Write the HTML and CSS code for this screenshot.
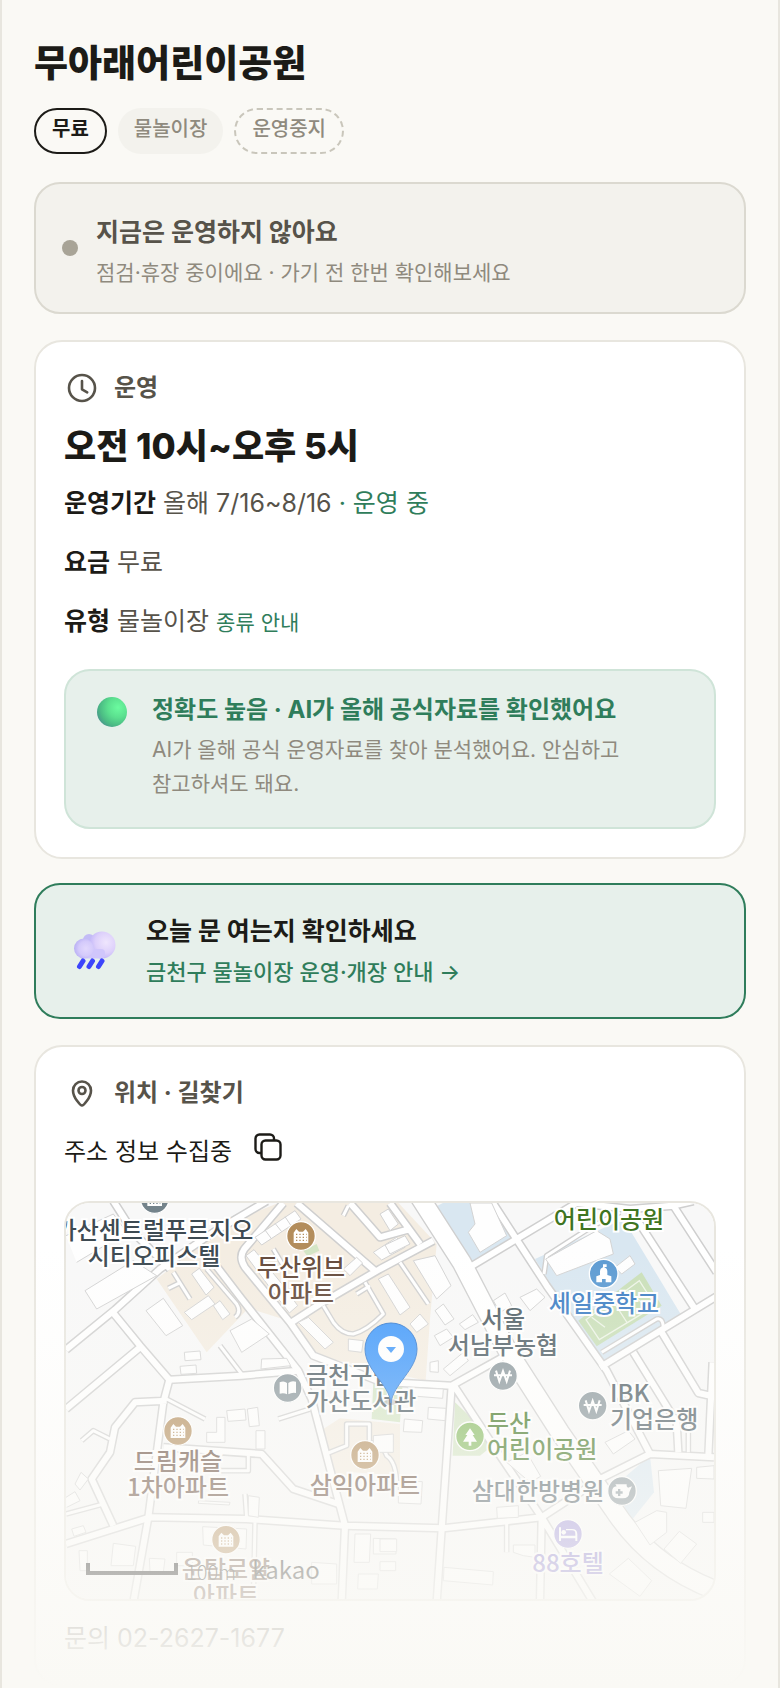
FILE: index.html
```html
<!DOCTYPE html>
<html lang="ko">
<head>
  <meta charset="UTF-8">
  <meta name="viewport" content="width=device-width, initial-scale=1.0">
  <title>무아래어린이공원</title>
  <link rel="stylesheet" href="styles.css">
</head>
<body>
  <main class="screen">
    <header class="place-header">
      <h1 class="place-name">무아래어린이공원</h1>
      <div class="chips">
        <span class="chip chip-free">무료</span>
        <span class="chip chip-type">물놀이장</span>
        <span class="chip chip-closed">운영중지</span>
      </div>
    </header>

    <section class="status">
      <span class="status-dot"></span>
      <div class="status-text">
        <p class="lead">지금은 운영하지 않아요</p>
        <p class="sub">점검·휴장 중이에요 · 가기 전 한번 확인해보세요</p>
      </div>
    </section>

    <!-- 운영 정보 -->
    <section class="card">
      <h2 class="card-title">
        <svg class="card-icon" viewBox="0 0 36 36" aria-hidden="true">
          <circle cx="18" cy="18" r="13"/>
          <path d="M18 11v8.300l5.200 3"/>
        </svg>
        운영
      </h2>
      <p class="hours">오전 10시~오후 5시</p>
      <div class="rows">
        <p class="row"><b>운영기간</b> 올해 7/16~8/16 <span class="open">· 운영 중</span></p>
        <p class="row"><b>요금</b> 무료</p>
        <p class="row"><b>유형</b> 물놀이장 <a class="type-link" href="#">종류 안내</a></p>
      </div>
      <div class="trust">
        <svg class="trust-icon" viewBox="0 0 44 44" aria-hidden="true">
          <defs>
            <radialGradient id="ball" cx="0.7" cy="0.35" r="0.75">
              <stop offset="0" stop-color="#6bfb9f"/>
              <stop offset="0.45" stop-color="#5be08f"/>
              <stop offset="0.8" stop-color="#4bbb84"/>
              <stop offset="1" stop-color="#4a9a8c"/>
            </radialGradient>
          </defs>
          <circle cx="22" cy="22" r="15" fill="url(#ball)"/>
        </svg>
        <div>
          <p class="trust-title">정확도 높음 · AI가 올해 공식자료를 확인했어요</p>
          <p class="trust-desc">AI가 올해 공식 운영자료를 찾아 분석했어요. 안심하고 참고하셔도 돼요.</p>
        </div>
      </div>
    </section>

    <a class="today" href="#">
      <svg class="today-icon" viewBox="0 0 56 56" aria-hidden="true">
        <defs>
          <radialGradient id="puffA" cx="0.65" cy="0.4" r="0.65">
            <stop offset="0" stop-color="#efe6fd"/>
            <stop offset="0.6" stop-color="#ddd0fb"/>
            <stop offset="1" stop-color="#bfb4f8"/>
          </radialGradient>
          <radialGradient id="puffB" cx="0.6" cy="0.5" r="0.6">
            <stop offset="0" stop-color="#e2d8fd"/>
            <stop offset="0.6" stop-color="#d4cafb"/>
            <stop offset="1" stop-color="#b9b0f4"/>
          </radialGradient>
        </defs>
        <circle cx="23" cy="17" r="6" fill="#c3bbf6"/>
        <circle cx="36" cy="22" r="13.500" fill="url(#puffA)"/>
        <rect x="13" y="26" width="26" height="9.500" rx="4" fill="#d0c6fb"/>
        <circle cx="18" cy="25.500" r="10" fill="url(#puffB)"/>
        <g stroke="#3d45fb" stroke-width="5" stroke-linecap="round">
          <path d="M13.500 43.500l3.500-5.500M23 43.500l3.500-5.500M32.500 43.500l3.500-5.500"/>
        </g>
      </svg>
      <span class="today-text">
        <span class="lead">오늘 문 여는지 확인하세요</span>
        <span class="today-sub">금천구 물놀이장 운영·개장 안내 →</span>
      </span>
    </a>

    <!-- 위치 -->
    <section class="card">
      <h2 class="card-title">
        <svg class="card-icon" viewBox="0 0 36 36" aria-hidden="true">
          <path d="M18 30.500c-1.200 0-9-7.500-9-15a9 9 0 0 1 18 0c0 7.500-7.800 15-9 15z"/>
          <circle cx="18" cy="15.500" r="3.500"/>
        </svg>
        위치 · 길찾기
      </h2>
      <div class="address">
        <span>주소 정보 수집중</span>
        <button class="copy" type="button" aria-label="주소 복사">
          <svg viewBox="0 0 28 28" aria-hidden="true">
            <rect x="7.500" y="7.500" width="19" height="19" rx="4"/>
            <path d="M7 20H5.500a4 4 0 0 1-4-4V5.500a4 4 0 0 1 4-4H16a4 4 0 0 1 4 4V7"/>
          </svg>
        </button>
      </div>

      <div class="map">
        <svg class="map-ground" viewBox="198 42 1944 1188" preserveAspectRatio="xMidYMid slice" aria-hidden="true">
          <defs>
            <g id="roads">
              <path d="M198 482L345 362L480 240L640 130L800 36M340 36L400 130L510 240"/>
              <path d="M340 372L420 470L508 572L725 560L895 545M198 660L420 475"/>
              <path d="M610 180L725 330L895 545L935 630L1035 1010L1025 1240"/>
              <path d="M508 572L490 640L445 985L400 1240M500 635L405 640L345 715L330 790L275 870L340 1010"/>
              <path d="M198 1065L450 985L740 990L1035 1010L1330 1018L1625 985L1810 865L1950 795L2142 805"/>
              <path d="M490 775L785 795L880 900L1015 945"/>
              <path d="M1475 36L1640 290L1820 545L1950 795M1400 240L1550 150L1730 42"/>
              <path d="M1800 535L2150 322M1890 60L2085 360M2020 50L2150 250M1730 42L1890 60L2020 50L2080 36"/>
              <path d="M1355 590L1325 1020L1310 1240M1362 590L1480 770L1625 985L1780 1240M1625 985L1620 1240"/>
              <path d="M850 42L733 180Q715 205 735 235L870 400L940 500L1140 578L1355 590L1520 498"/>
              <path d="M890 42L1130 250M875 400L960 345L1140 240L1300 155M1050 42L1140 145L1230 120M1170 42L1260 165"/>
              <path d="M1985 430L2095 612L2150 625M1900 490L2030 700L2035 790M2138 520L2125 800"/>
            </g>
            <g id="lanes">
              <path d="M1095 280L1150 375Q1100 425 1060 435Q1025 435 1000 400L970 350M1200 220L1285 345"/>
              <path d="M620 240L710 345Q725 370 705 385M520 250L570 330M505 298L542 280M660 470L725 555"/>
              <path d="M835 690L930 660M500 630L615 690M245 755L280 725L330 750M735 915L740 985M765 1000L760 1240"/>
              <path d="M198 975L310 945M1520 1005L1520 1090M985 792L1040 770V705H1108V760Q1150 765 1160 800Q1190 820 1190 890"/>
              <path d="M1632 255L1640 200L1780 110L1860 70M1805 490L1970 390Q1990 385 1990 420M660 845H745V800"/>
              <path d="M1030 80L1045 50M820 180L850 230M2065 700V790M1070 315L1110 290"/>
            </g>
            <symbol id="apt" viewBox="-44 -44 88 88">
              <path fill="#fff" d="M-22 21V-10L-14-21L-6-13H6L14-21L22-10V21z"/>
              <path stroke="currentColor" stroke-width="4" stroke-dasharray="4 6" d="M-15-5H17M-15 4H17M-15 13H17"/>
            </symbol>
            <symbol id="won" viewBox="-44 -44 88 88">
              <path fill="none" stroke="#fff" stroke-width="6" d="M-21-16L-11 16L0-15L11 16L21-16M-27-2H27"/>
            </symbol>
          </defs>

          <rect x="198" y="42" width="1944" height="1188" fill="#f8f8f8"/>
          <path fill="#f4ede2" d="M690 100L850 36H1190L1310 165L1290 390L1277 575L950 500L880 400L745 358L620 490L470 270z"/>
          <path fill="#f4ede2" d="M970 720L1020 688L1200 705V860L1060 850L1000 890z"/>
          <path fill="#d9e7f1" d="M1275 70L1340 36H1475L1545 150L1400 240zM1605 210L1870 90L2045 380L1800 520z"/>
          <path fill="#d9e7f1" d="M1850 885L1950 800L1962 910L1890 1000z"/>
          <path fill="#c9dfb8" d="M1735 395L1925 250L1985 350L1790 472z"/>
          <path fill="none" stroke="#eef5e8" stroke-width="4" d="M1758 392L1918 275L1966 350L1798 452zM1838 334L1882 402M1775 385L1815 415M1880 305L1925 340"/>
          <path fill="#d4e5c5" d="M1120 580H1208L1200 700L1115 690zM1365 640L1358 800H1440L1490 760zM910 185L950 165L958 185L922 202z"/>

          <g fill="none" stroke="#cfcfcf" stroke-linejoin="round">
            <use href="#roads" stroke-width="27"/>
            <use href="#lanes" stroke-width="17"/>
            <path stroke-width="62" d="M1250 10L1385 220L1520 480L1680 730L1840 960Q1950 1130 2150 1205"/>
          </g>
          <g fill="none" stroke="#fff" stroke-linejoin="round">
            <use href="#roads" stroke-width="18"/>
            <use href="#lanes" stroke-width="9"/>
            <path stroke-width="54" d="M1250 10L1385 220L1520 480L1680 730L1840 960Q1950 1130 2150 1205"/>
          </g>

          <g fill="#fefefe" stroke="#d3d3d3" stroke-width="3">
            <path d="M255 305L400 215L470 260L290 360zM438 365L490 328L548 410L498 440zM198 140L340 75L380 130L230 220"/>
            <path d="M690 425L755 390L808 435L725 490zM553 490L600 486L603 512L555 515zM540 532L588 528L590 553L543 556zM785 510L860 508L872 530L783 540z"/>
            <path d="M765 145L885 65L903 90L785 168zM795 123L815 150M825 103L845 128M855 83L873 110"/>
            <path d="M738 200L762 182L850 290L893 350L868 372L820 310z"/>
            <path d="M575 255L598 238L642 295L618 318zM553 370L625 320L645 345L575 392zM640 350L660 335L690 375L668 392z"/>
            <path d="M895 400L925 385L1000 460L975 480zM1045 450L1090 455L1085 490L1045 485zM1030 240L1070 205L1088 222L1050 260z"/>
            <path d="M1120 190L1190 145L1215 175L1145 213zM1135 270L1165 255L1230 355L1200 378zM1230 405L1260 375L1285 405L1250 430z"/>
            <path d="M1140 75L1165 60L1195 105L1170 125zM1155 168L1215 140L1230 165L1170 195z"/>
            <path d="M1240 215L1305 200L1353 290L1310 330zM1305 365L1330 345L1362 390L1335 408zM1378 405L1418 377L1435 400L1395 422zM1303 440L1340 420L1360 445L1320 470z"/>
            <path d="M1405 130L1425 105L1410 42H1475L1520 140L1440 190zM1637 210L1790 125L1830 150L1840 195L1670 260zM1845 235L1890 200L1905 225L1865 255z"/>
            <path d="M1480 335L1515 312L1535 350L1500 370zM1560 325L1610 300L1635 325L1590 365zM1290 520L1315 515V550L1290 548zM1330 540L1390 490L1405 515L1350 560z"/>
            <path d="M1225 595L1330 600L1328 628L1225 620zM1285 655L1338 658L1335 695L1283 690zM1213 690L1268 695L1265 730L1210 728z"/>
            <path d="M680 665L735 660L738 693L684 697zM742 660L773 655L778 710L748 713zM650 685H675V760H620V730H650zM768 725H795V780H768z"/>
            <path d="M225 885L243 850L265 870L240 903zM215 1020L250 1010L258 1030L222 1042zM198 925L225 908L240 935L200 955"/>
            <path d="M340 1063L407 1072L400 1130L333 1130zM237 1085H262V1145H240zM448 1108L495 1110L490 1150L450 1150zM530 1090H577V1130H530z"/>
            <path d="M608 1013L740 1020L738 1080L610 1068zM596 935L690 940L688 948L595 943zM745 920L778 925L775 985L745 980z"/>
            <path d="M1065 1035H1112L1108 1120H1062zM1120 1048L1188 1050V1095H1120zM1075 1155H1135L1132 1200H1073zM935 1120L1010 1125V1185H935z"/>
            <path d="M1120 740L1180 735V790H1120zM1195 875L1267 878L1263 945L1195 942zM1490 955L1555 950V985L1492 988zM1540 1068H1605V1105L1570 1100L1540 1090z"/>
            <path d="M1332 1135L1480 1148L1478 1188L1330 1175zM1140 1050H1190V1088H1140zM1140 1118H1187V1145H1140z"/>
            <path d="M1520 820L1580 790L1622 862L1590 880zM1815 760L1885 725L1905 750L1840 795zM1975 845L2075 838L2058 958L1982 950z"/>
            <path d="M1905 1000L1970 965L2000 970V1030L1950 1068zM1992 1080L2038 1027L2090 1065L2042 1123zM1828 1155L1885 1108L1955 1175L1920 1222zM2090 835L2142 830V870L2090 868zM2108 970H2142V1000H2108z"/>
          </g>

          <g stroke="#fff" stroke-width="4">
            <circle cx="464" cy="30" r="43" fill="#74838b"/>
            <circle cx="903" cy="141" r="43" fill="#b38d5c"/>
            <circle cx="534" cy="726" r="43" fill="#b38d5c"/>
            <circle cx="1095" cy="798" r="43" fill="#b38d5c"/>
            <circle cx="678" cy="1052" r="43" fill="#b38d5c"/>
            <circle cx="863" cy="597" r="43" fill="#89969c"/>
            <circle cx="1509" cy="561" r="43" fill="#89969c"/>
            <circle cx="1778" cy="650" r="43" fill="#89969c"/>
            <circle cx="1866" cy="906" r="43" fill="#89969c"/>
            <circle cx="1811" cy="254" r="43" fill="#5b9ad2"/>
            <circle cx="1410" cy="742" r="43" fill="#86bb60"/>
            <circle cx="1704" cy="1035" r="43" fill="#a093db"/>
          </g>
          <use href="#apt" x="420" y="-14" width="88" height="88" color="#74838b"/>
          <use href="#apt" x="859" y="97" width="88" height="88" color="#b38d5c"/>
          <use href="#apt" x="490" y="682" width="88" height="88" color="#b38d5c"/>
          <use href="#apt" x="1051" y="754" width="88" height="88" color="#b38d5c"/>
          <use href="#apt" x="634" y="1008" width="88" height="88" color="#b38d5c"/>
          <use href="#won" x="1465" y="517" width="88" height="88"/>
          <use href="#won" x="1734" y="606" width="88" height="88"/>
          <g fill="#fff">
            <path d="M839 580Q852 574 861 582V616Q852 611 839 614zM865 582Q874 574 888 578V612Q874 610 865 616z"/>
            <path d="M1789 280V262L1800 258V248Q1800 238 1809 235V226H1820V234H1813V235Q1822 238 1822 248V258L1834 262V280H1817V270H1806V280z"/>
            <path d="M1410 718L1424 738H1418L1431 758H1414V770H1406V758H1389L1402 738H1396z"/>
            <path fill-rule="evenodd" d="M1846 886H1880V892L1884 896L1896 892L1888 910Q1888 928 1868 928H1856Q1836 928 1836 910Q1836 892 1850 892zM1854 900V907H1847V914H1854V921H1861V914H1868V907H1861V900z"/>
            <path d="M1677 1015H1683V1040H1726V1034Q1726 1024 1716 1024H1698V1020H1716Q1732 1020 1732 1036V1056H1726V1048H1683V1056H1677z"/>
            <circle cx="1691" cy="1030" r="7"/>
          </g>
        </svg>

        <span class="label centered gasan">가산센트럴푸르지오<br>시티오피스텔</span>
        <span class="label centered brown doosan-apt">두산위브<br>아파트</span>
        <span class="label centered green park">어린이공원</span>
        <span class="label centered blue school">세일중학교</span>
        <span class="label centered gray nonghyup">서울<br>서남부농협</span>
        <span class="label gray library">금천구립<br>가산도서관</span>
        <span class="label gray ibk">IBK<br>기업은행</span>
        <span class="label green doosan-park">두산<br>어린이공원</span>
        <span class="label centered brown dream">드림캐슬<br>1차아파트</span>
        <span class="label centered brown samik">삼익아파트</span>
        <span class="label centered gray hospital">삼대한방병원</span>
        <span class="label centered purple hotel">88호텔</span>
        <span class="label centered brown royal">운탑로얄<br>아파트</span>

        <svg class="pin" viewBox="0 0 54 84" aria-hidden="true">
          <ellipse cx="27" cy="80" rx="7" ry="3" fill="#00000030"/>
          <path fill="#3f98fb" stroke="#2f78d0" d="M27 81C25 62 1 48 1 27a26 26 0 0 1 52 0C53 48 29 62 27 81z"/>
          <circle cx="27" cy="27" r="13" fill="#fff"/>
          <path fill="#3f98fb" d="M22 25h10l-5 6z"/>
        </svg>
        <div class="map-scale">
          <span class="scale-bar"></span>
          <span class="scale-text">100m</span>
          <span class="kakao">kakao</span>
        </div>
      </div>

      <p class="contact">문의 <a href="tel:02-2627-1677">02-2627-1677</a></p>
    </section>

    <div class="fade"></div>
  </main>
</body>
</html>
```

FILE: styles.css
```css
* {
  box-sizing: border-box;
}
body {
  margin: 0;
  background: #faf9f5;
  color: #1c1b17;
  font-family: Inter, "Noto Sans CJK KR", sans-serif;
}
h1, h2, p {
  margin: 0;
}
a {
  color: inherit;
  text-decoration: none;
}
.screen {
  position: relative;
  height: 100vh;
  overflow: hidden;
  padding: 38px 32px 0;
  border: solid #e8e6df;
  border-width: 0 2px;
}

/* header */
.place-name {
  font-size: 37px;
  line-height: 52px;
  font-weight: 800;
}
.chips {
  display: flex;
  gap: 11px;
  margin: 18px 0 28px;
}
.chip {
  height: 46px;
  padding: 0 16px;
  border-radius: 23px;
  font-size: 20px;
  line-height: 38px;
  font-weight: 500;
}
.chip-free {
  border: 2px solid #1c1b17;
  font-weight: 700;
}
.chip-type {
  background: #f3f2ed;
  color: #8f8a7e;
  line-height: 42px;
}
.chip-closed {
  border: 2px dashed #c9c6bb;
  color: #8f8a7e;
}

/* status */
.status {
  display: flex;
  align-items: center;
  gap: 18px;
  padding: 22px 26px;
  border: 2px solid #dbd9d0;
  border-radius: 26px;
  background: #f3f2ed;
}
.status-dot {
  width: 16px;
  height: 16px;
  border-radius: 50%;
  background: #a8a497;
}
.status-text {
  padding-top: 6px;
  color: #57534a;
}
.lead {
  display: block;
  margin-bottom: 4px;
  font-size: 25px;
  line-height: 40px;
  font-weight: 700;
}
.sub {
  font-size: 21px;
  line-height: 34px;
  color: #8f8a7e;
}

/* cards */
.card {
  margin-top: 26px;
  padding: 28px;
  border: 2px solid #e8e6df;
  border-radius: 28px;
  background: #fff;
}
.card-title {
  display: flex;
  align-items: center;
  gap: 14px;
  font-size: 24px;
  line-height: 36px;
  font-weight: 700;
  color: #57534a;
}
.card-icon {
  width: 36px;
  height: 36px;
  fill: none;
  stroke: currentColor;
  stroke-width: 2.6;
  stroke-linecap: round;
  stroke-linejoin: round;
}
.hours {
  margin: 16px 0 14px;
  font-size: 35px;
  line-height: 48px;
  font-weight: 800;
}
.rows {
  display: flex;
  flex-direction: column;
  gap: 21px;
}
.row {
  font-size: 25px;
  line-height: 38px;
  color: #57534a;
}
.row b {
  color: #1c1b17;
}
.open, .type-link {
  color: #2f7d5b;
}
.type-link {
  font-size: 21px;
  line-height: 24px;
}
.trust {
  display: flex;
  align-items: flex-start;
  gap: 18px;
  margin-top: 29px;
  padding: 22px 60px 26px 24px;
  border: 2px solid #cfe4d8;
  border-radius: 26px;
  background: #e7f0eb;
}
.trust-icon {
  flex: none;
  width: 44px;
  height: 44px;
  margin-top: -3px;
}
.trust-title {
  margin-bottom: 6px;
  font-size: 24px;
  line-height: 34px;
  font-weight: 700;
  color: #2f7d5b;
}
.trust-desc {
  font-size: 21px;
  line-height: 34px;
  color: #8f8a7e;
  word-break: keep-all;
}

/* today link */
.today {
  display: flex;
  align-items: center;
  gap: 24px;
  margin-top: 24px;
  padding: 26px 30px;
  border: 2px solid #2f7d5b;
  border-radius: 26px;
  background: #e7f0eb;
}
.today-icon {
  width: 56px;
  height: 56px;
}
.today-text {
  padding-bottom: 2px;
}
.today-sub {
  display: block;
  font-size: 22px;
  line-height: 34px;
  font-weight: 500;
  color: #2f7d5b;
}

/* location */
.address {
  display: flex;
  gap: 22px;
  margin-top: 22px;
  font-size: 24px;
  line-height: 38px;
}
.copy {
  width: 28px;
  height: 28px;
  padding: 0;
  border: 0;
  background: none;
  color: inherit;
  cursor: pointer;
}
.copy svg {
  display: block;
  fill: none;
  stroke: currentColor;
  stroke-width: 2.4;
}
.contact {
  margin-top: 18px;
  font-size: 25px;
  line-height: 38px;
  color: #57534a;
}

/* map */
.map {
  position: relative;
  height: 400px;
  margin-top: 30px;
  overflow: hidden;
  border: 2px solid #e8e6df;
  border-radius: 26px;
  font-family: "Noto Sans CJK KR", sans-serif;
}
.map-ground {
  display: block;
  width: 100%;
  height: 100%;
}
.label {
  position: absolute;
  font-size: 24px;
  line-height: 26px;
  font-weight: 500;
  color: #3d4a52;
  white-space: nowrap;
  -webkit-text-stroke: 4px #fff;
  paint-order: stroke fill;
  transform: translateY(-50%);
}
.centered {
  text-align: center;
  transform: translate(-50%, -50%);
}
.brown { color: #64493a; }
.green { color: #3f7421; }
.blue { color: #3b7dc4; }
.gray { color: #4d5c64; }
.purple { color: #8577cc; }
.gasan { left: 88px; top: 39px; }
.doosan-apt { left: 235px; top: 76px; }
.park { left: 543px; top: 15px; }
.school { left: 538px; top: 99px; }
.nonghyup { left: 437px; top: 128px; }
.library { left: 240px; top: 184px; }
.ibk { left: 544px; top: 202px; }
.doosan-park { left: 421px; top: 232px; }
.dream { left: 112px; top: 270px; }
.samik { left: 299px; top: 281px; }
.hospital { left: 472px; top: 287px; }
.hotel { left: 502px; top: 359px; }
.royal { left: 160px; top: 378px; }
.pin {
  position: absolute;
  left: 298px;
  top: 119px;
  width: 54px;
  height: 84px;
}
.map-scale {
  position: absolute;
  left: 20px;
  bottom: 14px;
  display: flex;
  align-items: center;
  line-height: 26px;
}
.scale-bar {
  width: 92px;
  height: 12px;
  border: solid #000;
  border-width: 0 4px 4px;
}
.scale-text {
  margin: 6px 16px 0 8px;
  font-size: 20px;
  font-weight: 300;
}
.kakao {
  font-size: 24px;
}

/* bottom fade */
.fade {
  position: absolute;
  left: -2px;
  right: -2px;
  bottom: 0;
  height: 440px;
  background: linear-gradient(#faf9f500, #faf9f5);
  pointer-events: none;
}
```
